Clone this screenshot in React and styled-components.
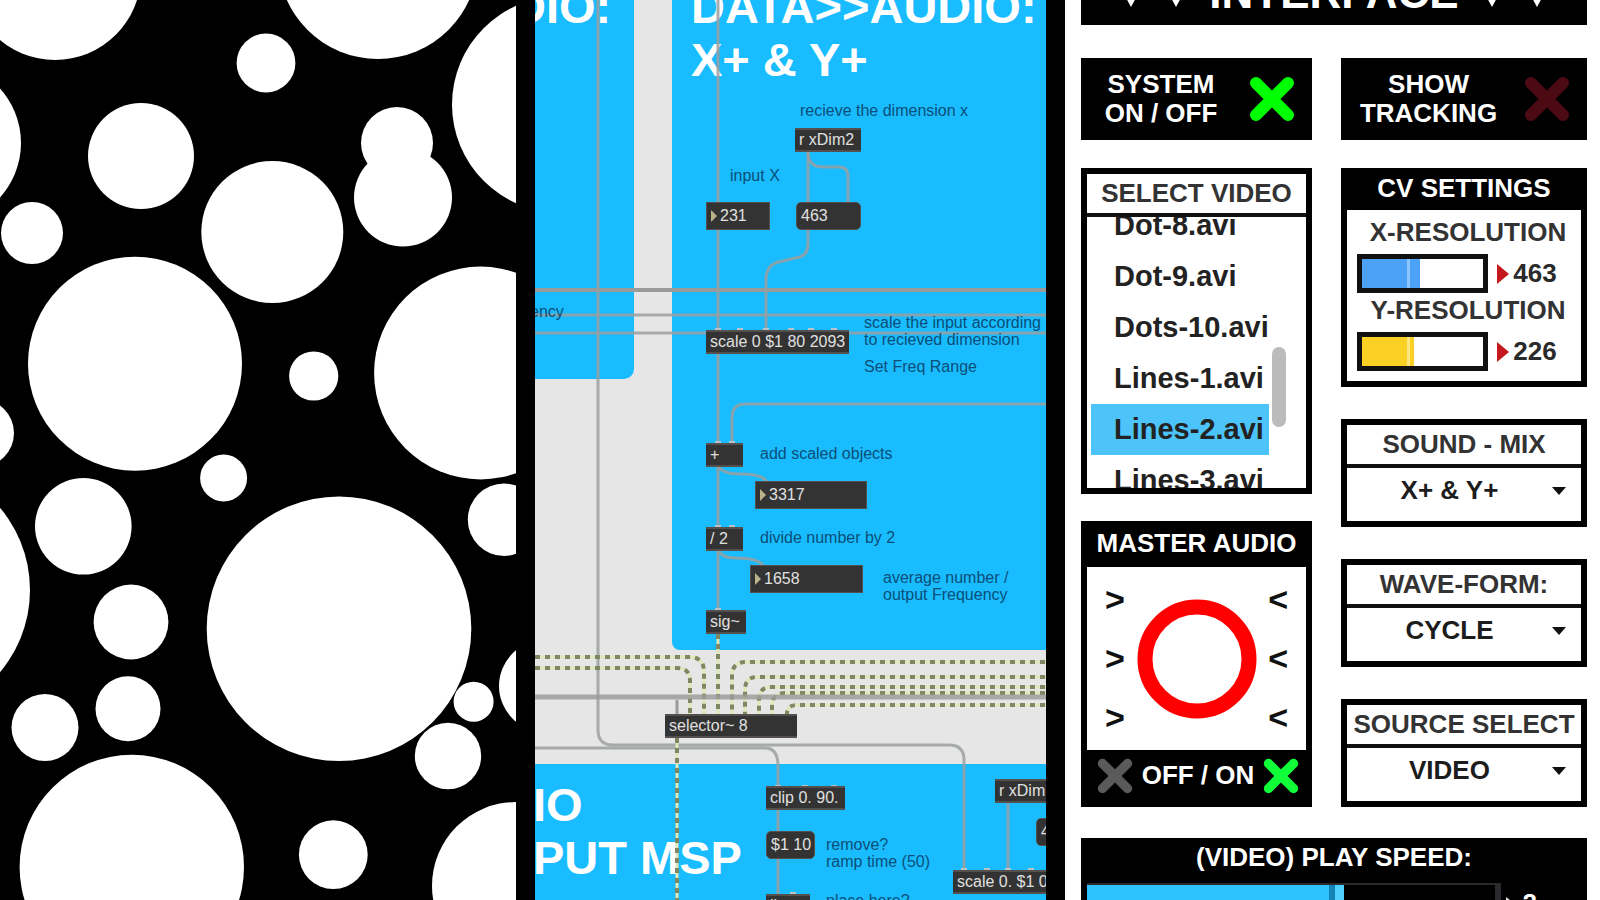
import React, { useState } from 'react';
import styled, { createGlobalStyle } from 'styled-components';

const GlobalStyle = createGlobalStyle`
  * {
    box-sizing: border-box;
  }
  body {
    margin: 0;
    background: #000;
    font-family: "Liberation Sans", Arial, sans-serif;
  }
`

const Page = styled.main`
  display: grid;
  grid-template-columns: 516fr 511fr 535fr;
  column-gap: 19px;
  height: 100vh;
  overflow: hidden;
  background: #000;
`

/* ---------- tracked video ---------- */

const VideoSvg = styled.svg`
  display: block;
  width: 100%;
  height: 100%;
`

const dots = [
  [55, -26, 86], [378, -41, 100], [266, 63, 29.4], [560, 104.5, 108],
  [-60, 143, 81], [141, 156, 53], [397, 143, 36], [403, 197.5, 49],
  [272.3, 232, 71], [32, 233, 31], [135, 363.7, 107], [313.7, 376, 24.6],
  [480.5, 373, 106.4], [-20, 433, 34], [223.6, 478, 23.5], [83.3, 526.3, 48.3],
  [-98, 590, 128], [131, 622, 37.4], [339, 628.7, 132.3], [504, 519.7, 36.2],
  [473.6, 701.7, 20], [448, 756, 33.2], [545, 686, 46], [45, 727.5, 33.5],
  [128, 708.7, 32.5], [131.8, 867, 112.2], [333.3, 854.7, 34.4], [516, 886, 84],
]

const Video = () => (
  <VideoSvg viewBox="0 0 516 900" preserveAspectRatio="xMinYMin slice" role="img" aria-label="Video">
    {dots.map(([cx, cy, r]) => (
      <circle key={`${cx}-${cy}`} cx={cx} cy={cy} r={r} fill="#fff" />
    ))}
  </VideoSvg>
)

/* ---------- patch ---------- */

const Canvas = styled.section`
  position: relative;
  overflow: hidden;
  background: #e6e6e6;
`
const Zone = styled.div`
  position: absolute;
  left: ${p => p.$x}px;
  top: ${p => p.$y}px;
  width: ${p => p.$w};
  height: ${p => p.$h}px;
  border-radius: ${p => p.$radius || 0};
  background: #19bcff;
`
const ZoneTitle = styled.h2`
  position: absolute;
  left: ${p => p.$x}px;
  top: ${p => p.$y}px;
  margin: 0;
  color: #fff;
  font-size: 47px;
  line-height: 53px;
  font-weight: bold;
  white-space: pre;
`
const Wires = styled.svg`
  position: absolute;
  left: 0;
  top: 0;
  width: 100%;
  height: 100%;
`
const Note = styled.p`
  position: absolute;
  left: ${p => p.$x}px;
  top: ${p => p.$y}px;
  margin: 0;
  color: #0b4f78;
  font-size: 16px;
  line-height: 17px;
  white-space: pre;
`
const Node = styled.div`
  position: absolute;
  left: ${p => p.$x}px;
  top: ${p => p.$y}px;
  width: ${p => p.$w}px;
  height: ${p => (p.$tall ? 28 : 24)}px;
  padding: 0 4px;
  border: solid #55504d;
  border-width: ${p => (p.$tall ? '1px' : '2px 0')};
  border-radius: ${p => (p.$round ? 5 : 0)}px;
  background: #333;
  color: #e0e0e0;
  font-size: 16px;
  line-height: ${p => (p.$tall ? 26 : 20)}px;
  white-space: pre;
  overflow: hidden;
`
const Marker = styled.svg`
  width: 6px;
  height: 12px;
  margin-right: 3px;
  vertical-align: -1px;
`

const NumberNode = ({ value, ...rest }) => (
  <Node $tall {...rest}>
    <Marker viewBox="0 0 6 12"><path d="M0 0 L6 6 L0 12 Z" fill="#bbb38a" /></Marker>
    {value}
  </Node>
)

const cords = [
  'M63 0 V730 Q63 745 78 745 H414 Q429 745 429 760 V872',
  'M0 748 H230 Q243 748 243 766 V900',
  'M0 315 H2000',
  'M0 333 H2000',
  'M183 0 V612',
  'M273 150 V204',
  'M273 152 Q273 167 288 167 H304 Q313 167 313 176 V204',
  'M273 228 V244 Q273 257 260 258 L248 261 Q231 263 231 280 V332',
  'M2000 404 H210 Q197 404 197 418 V444',
  'M183 465 Q186 474 205 474 Q228 474 232 482',
  'M183 549 Q186 558 200 558 Q224 558 228 566',
  'M473 800 V872',
]
const signals = [
  'M0 657 H154 Q169 657 169 672 V714',
  'M0 668 H142 Q155 668 155 681 V714',
  'M183 634 V714',
  'M2000 662 H211 Q197 662 197 676 V714',
  'M2000 677 H222 Q210 677 210 690 V714',
  'M2000 687 H236 Q224 687 224 700 V714',
  'M2000 693 H250 Q237 693 237 706 V714',
  'M2000 705 H262 Q252 705 252 714',
  'M142 738 V900',
]
const nubs = [
  [202, 328], [296, 328], [228, 328], [253, 328], [273, 328], [180, 328],
  [180, 441], [194, 441], [180, 525], [194, 525], [180, 608],
  [240, 785], [267, 785], [296, 785], [255, 892],
  [426, 868], [449, 868], [470, 868], [493, 868],
]

const Patch = () => (
  <Canvas aria-label="Patch">
    <Zone $x={0} $y={0} $w="99px" $h={379} $radius="0 0 10px 0" />
    <Zone $x={137} $y={0} $w="100%" $h={650} $radius="0 0 0 8px" />
    <Zone $x={0} $y={764} $w="100%" $h={400} />

    <ZoneTitle $x={-23} $y={-20}>DIO:</ZoneTitle>
    <ZoneTitle $x={156} $y={-20}>{'DATA>>AUDIO:\nX+ & Y+'}</ZoneTitle>
    <ZoneTitle $x={-2} $y={778}>{'IO\nPUT MSP'}</ZoneTitle>

    <Wires fill="none" aria-hidden="true">
      <path d="M0 290 H2000" stroke="#999b9b" strokeWidth="4" />
      {cords.map(d => <path key={d} d={d} stroke="#9b9f9f" strokeWidth="3" strokeOpacity="0.85" />)}
      {signals.map(d => (
        <g key={d}>
          <path d={d} stroke="#dfe8b8" strokeWidth="3" />
          <path d={d} stroke="#7d8763" strokeWidth="4" strokeDasharray="5 5" />
        </g>
      ))}
      <path d="M0 697 H2000" stroke="#9c9c9a" strokeWidth="5" strokeOpacity="0.85" />
      <path d="M142 700 V714" stroke="#999b9b" strokeWidth="3" />
      {nubs.map(([x, y]) => <rect key={`${x}-${y}`} x={x} y={y} width="6" height="4" fill="#b8c4c8" />)}
    </Wires>

    <Note $x={-5} $y={303}>ency</Note>
    <Note $x={265} $y={102}>recieve the dimension x</Note>
    <Note $x={195} $y={167}>input X</Note>
    <Note $x={329} $y={314}>{'scale the input according\nto recieved dimension'}</Note>
    <Note $x={329} $y={358}>Set Freq Range</Note>
    <Note $x={225} $y={445}>add scaled objects</Note>
    <Note $x={225} $y={529}>divide number by 2</Note>
    <Note $x={348} $y={569}>{'average number /\noutput Frequency'}</Note>
    <Note $x={291} $y={836}>{'remove?\nramp time (50)'}</Note>
    <Note $x={291} $y={892}>place here?</Note>

    <Node $x={260} $y={128} $w={66}>r xDim2</Node>
    <NumberNode $x={171} $y={202} $w={64} value="231" />
    <Node $x={261} $y={202} $w={65} $tall $round>463</Node>
    <Node $x={171} $y={330} $w={143}>scale 0 $1 80 2093</Node>
    <Node $x={171} $y={443} $w={37}>+</Node>
    <NumberNode $x={220} $y={481} $w={112} value="3317" />
    <Node $x={171} $y={527} $w={37}>/ 2</Node>
    <NumberNode $x={215} $y={565} $w={113} value="1658" />
    <Node $x={171} $y={610} $w={40}>sig~</Node>
    <Node $x={130} $y={714} $w={132}>selector~ 8</Node>
    <Node $x={231} $y={786} $w={79}>clip 0. 90.</Node>
    <Node $x={231} $y={831} $w={49} $tall $round>$1 10</Node>
    <Node $x={231} $y={894} $w={44}>line~</Node>
    <Node $x={460} $y={779} $w={66}>r xDim2</Node>
    <Node $x={501} $y={818} $w={65} $tall $round>463</Node>
    <Node $x={418} $y={870} $w={143}>scale 0. $1 0.</Node>
  </Canvas>
)

/* ---------- interface ---------- */

const Panel = styled.section`
  padding: 0 13px 0 16px;
  background: #fff;
  color: #2a2a2a;
  font-size: 26px;
  font-weight: bold;
  line-height: 29px;
  overflow: hidden;
`
const Banner = styled.header`
  display: flex;
  align-items: flex-end;
  justify-content: center;
  gap: 21px;
  height: 25px;
  padding-bottom: 8px;
  margin-bottom: 33px;
  background: #000;
  color: #fff;
  overflow: hidden;
`
const BannerTitle = styled.h1`
  margin: 0;
  font-size: 44px;
  line-height: 48px;
`
const BannerMark = styled.svg`
  flex: none;
  width: 24px;
  height: 22px;
  margin-bottom: 10px;
`
const Columns = styled.div`
  display: grid;
  grid-template-columns: 231fr 246fr;
  column-gap: 29px;
  margin-bottom: ${p => p.$gap}px;
`
const Stack = styled.div`
  display: flex;
  flex-direction: column;
  gap: ${p => p.$gap}px;
`
const Toggle = styled.button`
  display: flex;
  align-items: center;
  gap: 8px;
  height: 82px;
  padding: 0 17px 0 0;
  border: 0;
  background: #000;
  color: #fff;
  font: inherit;
  white-space: pre;
`
const ToggleText = styled.span`
  flex: 1;
  text-align: center;
`
const CrossSvg = styled.svg`
  display: block;
  flex: none;
  width: ${p => p.$size}px;
  height: ${p => p.$size}px;
`
const Card = styled.section`
  border: 6px solid #000;
  background: #fff;
`
const CardTitle = styled.h2`
  display: block;
  margin: 0;
  height: ${p => (p.$dark ? 36 : 43)}px;
  padding-top: ${p => (p.$dark ? 0 : 5)}px;
  border-bottom: ${p => (p.$dark ? 0 : 4)}px solid #111;
  background: ${p => (p.$dark ? '#000' : '#fff')};
  color: ${p => (p.$dark ? '#fff' : '#333')};
  font-size: 26px;
  line-height: 29px;
  text-align: center;
  white-space: nowrap;
`
const ListBody = styled.div`
  display: flex;
  justify-content: space-between;
  height: 271px;
  padding: 0 20px 0 4px;
  overflow: hidden;
`
const FileList = styled.ul`
  flex: none;
  width: 178px;
  margin: -17px 0 0;
  padding: 0;
  list-style: none;
`
const FileButton = styled.button`
  display: block;
  width: 100%;
  height: 51px;
  padding: 0 0 0 23px;
  border: 0;
  background: ${p => (p.$active ? '#4cc4fa' : 'transparent')};
  color: #222;
  font: inherit;
  font-size: 29px;
  text-align: left;
  white-space: nowrap;
`
const Thumb = styled.div`
  width: 14px;
  height: 80px;
  margin-top: 130px;
  border-radius: 7px;
  background: #bbb;
`
const ResolutionList = styled.div`
  padding: 5px 0 10px;
`
const ResolutionLabel = styled.label`
  display: block;
  padding: 2px 0 7px 8px;
  line-height: 30px;
  color: #333;
  text-align: center;
  white-space: nowrap;
`
const ResolutionRow = styled.div`
  display: grid;
  grid-template-columns: 132fr 62fr;
  column-gap: 9px;
  padding: 0 22px 0 10px;
`
const Range = styled.input`
  appearance: none;
  width: 100%;
  height: 39px;
  margin: 0;
  border: 5px solid #111;
  background: linear-gradient(
    to right,
    ${p => p.$color} 0 37%,
    ${p => p.$edge} 37% 40%,
    ${p => p.$color} 40% var(--fill),
    #fff var(--fill)
  );
  &::-webkit-slider-thumb {
    appearance: none;
    width: 1px;
    height: 29px;
  }
`
const Value = styled.output`
  display: flex;
  align-items: center;
  gap: 4px;
`
const Pointer = styled.svg`
  flex: none;
  width: 12px;
  height: 20px;
`
const SelectBox = styled.div`
  display: grid;
  grid-template-columns: 1fr 14px;
  align-items: center;
  height: 53px;
  padding: 0 15px 8px 14px;
`
const Select = styled.select`
  appearance: none;
  grid-area: 1 / 1 / 2 / 3;
  width: 100%;
  padding: 0 28px 0 0;
  border: 0;
  background: transparent;
  color: #1c1c1c;
  font: inherit;
  text-align: center;
  text-align-last: center;
`
const Caret = styled.svg`
  grid-area: 1 / 2;
  width: 14px;
  height: 8px;
  pointer-events: none;
`
const AudioBody = styled.div`
  display: flex;
  align-items: center;
  justify-content: space-between;
  height: 183px;
  padding: 0 18px;
`
const AudioTitle = styled(CardTitle)`
  height: 40px;
  padding-top: 2px;
`
const Ticks = styled.div`
  display: flex;
  flex-direction: column;
  color: #111;
  font-size: 34px;
  line-height: 59px;
`
const Dial = styled.svg`
  width: 120px;
  height: 120px;
`
const AudioFooter = styled.footer`
  display: flex;
  align-items: center;
  justify-content: space-between;
  height: 51px;
  padding: 0 7px 0 10px;
  background: #000;
  color: #fff;
`
const IconButton = styled.button`
  padding: 0;
  border: 0;
  background: none;
`
const SpeedCard = styled.section`
  padding: 5px 6px;
  background: #000;
  color: #fff;
`
const SpeedLabel = styled.label`
  display: block;
  height: 40px;
  text-align: center;
`
const SpeedRow = styled.div`
  display: grid;
  grid-template-columns: 411fr 74fr;
  column-gap: 5px;
`
const SpeedRange = styled.input`
  appearance: none;
  width: 100%;
  height: 40px;
  margin: 0;
  border: solid #2a2a2e;
  border-width: 2px 6px 2px 0;
  background: linear-gradient(
    to right,
    #2cc2ff 0 calc(var(--fill) - 15px),
    #1483b4 calc(var(--fill) - 15px) calc(var(--fill) - 9px),
    #4dcfff calc(var(--fill) - 9px) var(--fill),
    #000 var(--fill)
  );
  &::-webkit-slider-thumb {
    appearance: none;
    width: 1px;
    height: 36px;
  }
`

const Cross = ({ color, size }) => (
  <CrossSvg $size={size} viewBox="0 0 46 46" aria-hidden="true">
    <path d="M7 7 L39 39 M39 7 L7 39" stroke={color} strokeWidth="12" strokeLinecap="round" />
  </CrossSvg>
)

const Mark = () => (
  <BannerMark viewBox="0 0 24 22" aria-hidden="true">
    <path d="M0 0 H24 L12 22 Z" fill="#fff" />
  </BannerMark>
)

const ResolutionControl = ({ id, label, color, edge, fill, start, max }) => {
  const [value, setValue] = useState(start);
  return (
    <div>
      <ResolutionLabel htmlFor={id}>{label}</ResolutionLabel>
      <ResolutionRow>
        <Range
          id={id}
          type="range"
          min="0"
          max={max}
          value={value}
          onChange={e => setValue(Number(e.target.value))}
          $color={color}
          $edge={edge}
          style={{ '--fill': `${(fill * value) / start}%` }}
        />
        <Value htmlFor={id}>
          <Pointer viewBox="0 0 12 20"><path d="M0 0 L12 10 L0 20 Z" fill="#c4181c" /></Pointer>
          {value}
        </Value>
      </ResolutionRow>
    </div>
  )
}

const SelectCard = ({ id, label, options }) => (
  <Card>
    <CardTitle as="label" htmlFor={id}>{label}</CardTitle>
    <SelectBox>
      <Select id={id}>
        {options.map(option => <option key={option}>{option}</option>)}
      </Select>
      <Caret viewBox="0 0 14 8"><path d="M0 0 H14 L7 8 Z" fill="#111" /></Caret>
    </SelectBox>
  </Card>
)

const files = ['Dot-8.avi', 'Dot-9.avi', 'Dots-10.avi', 'Lines-1.avi', 'Lines-2.avi', 'Lines-3.avi']

const Interface = () => {
  const [system, setSystem] = useState(true);
  const [tracking, setTracking] = useState(false);
  const [file, setFile] = useState('Lines-2.avi');
  const [audio, setAudio] = useState(true);
  const [speed, setSpeed] = useState(2);
  return (
    <Panel>
      <Banner>
        <Mark /><Mark />
        <BannerTitle>INTERFACE</BannerTitle>
        <Mark /><Mark />
      </Banner>

      <Columns $gap={28}>
        <Toggle aria-pressed={system} onClick={() => setSystem(!system)}>
          <ToggleText>{'SYSTEM\nON / OFF'}</ToggleText>
          <Cross size={46} color={system ? '#00ff00' : '#0a4a0a'} />
        </Toggle>
        <Toggle aria-pressed={tracking} onClick={() => setTracking(!tracking)}>
          <ToggleText>{'SHOW\nTRACKING'}</ToggleText>
          <Cross size={46} color={tracking ? '#ff0000' : '#4c0a12'} />
        </Toggle>
      </Columns>

      <Columns $gap={31}>
        <Stack $gap={27}>
          <Card>
            <CardTitle>SELECT VIDEO</CardTitle>
            <ListBody>
              <FileList>
                {files.map(name => (
                  <li key={name}>
                    <FileButton $active={name === file} onClick={() => setFile(name)}>{name}</FileButton>
                  </li>
                ))}
              </FileList>
              <Thumb />
            </ListBody>
          </Card>
          <Card>
            <AudioTitle $dark>MASTER AUDIO</AudioTitle>
            <AudioBody>
              <Ticks><span>&gt;</span><span>&gt;</span><span>&gt;</span></Ticks>
              <Dial viewBox="0 0 120 120" role="img" aria-label="Level">
                <circle cx="60" cy="60" r="52" fill="none" stroke="#f00" strokeWidth="15" />
              </Dial>
              <Ticks><span>&lt;</span><span>&lt;</span><span>&lt;</span></Ticks>
            </AudioBody>
            <AudioFooter>
              <IconButton aria-label="Off" onClick={() => setAudio(false)}>
                <Cross size={36} color={audio ? '#5a5a5a' : '#ff0000'} />
              </IconButton>
              OFF / ON
              <IconButton aria-label="On" onClick={() => setAudio(true)}>
                <Cross size={36} color={audio ? '#10ff38' : '#5a5a5a'} />
              </IconButton>
            </AudioFooter>
          </Card>
        </Stack>

        <Stack $gap={32}>
          <Card>
            <CardTitle $dark>CV SETTINGS</CardTitle>
            <ResolutionList>
              <ResolutionControl id="x-res" label="X-RESOLUTION" color="#4ba2f6" edge="#8cc8ff" fill={48} start={463} max={960} />
              <ResolutionControl id="y-res" label="Y-RESOLUTION" color="#fbd024" edge="#ffe680" fill={43} start={226} max={520} />
            </ResolutionList>
          </Card>
          <SelectCard id="mix" label="SOUND - MIX" options={['X+ & Y+']} />
          <SelectCard id="wave" label="WAVE-FORM:" options={['CYCLE']} />
          <SelectCard id="source" label="SOURCE SELECT" options={['VIDEO']} />
        </Stack>
      </Columns>

      <SpeedCard>
        <SpeedLabel htmlFor="speed">(VIDEO) PLAY SPEED:</SpeedLabel>
        <SpeedRow>
          <SpeedRange
            id="speed"
            type="range"
            min="0"
            max="3"
            value={speed}
            onChange={e => setSpeed(Number(e.target.value))}
            style={{ '--fill': `${speed * 31.5}%` }}
          />
          <Value htmlFor="speed">
            <Pointer viewBox="0 0 12 20"><path d="M0 4 L8 10 L0 16 Z" fill="#ddd" /></Pointer>
            {speed}
          </Value>
        </SpeedRow>
      </SpeedCard>
    </Panel>
  )
}

const App = () => (
  <>
    <GlobalStyle />
    <Page>
      <Video />
      <Patch />
      <Interface />
    </Page>
  </>
)

export default App
